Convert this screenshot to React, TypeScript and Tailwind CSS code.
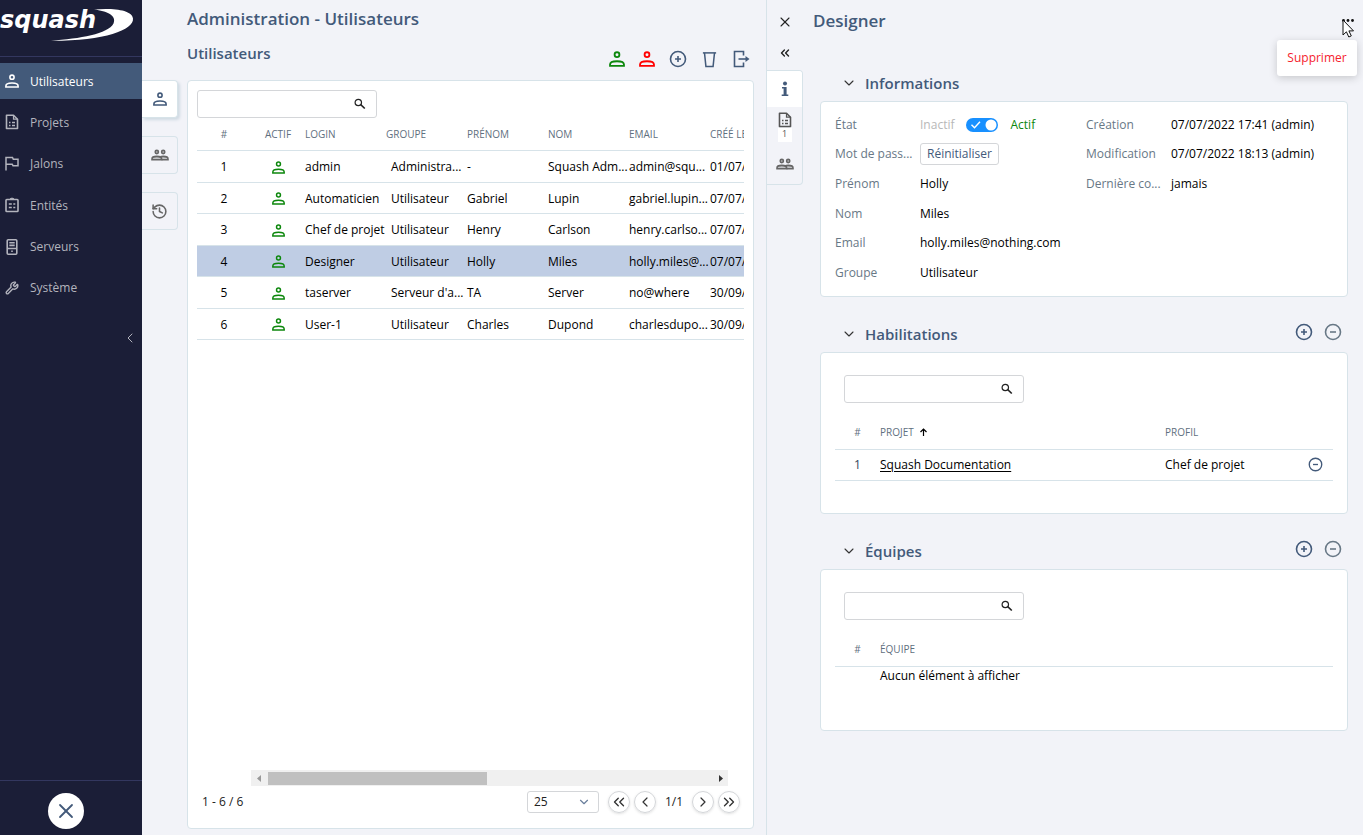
import React from "react";
import { Wrench, History, X, ChevronLeft, ChevronRight, ChevronDown, ChevronsLeft, ChevronsRight } from "lucide-react";

type IconProps = { className?: string };

const PersonIcon = ({ className = "" }: IconProps) => (
  <svg className={className} viewBox="0 0 14 14" fill="none" stroke="currentColor" strokeWidth="1.6" aria-hidden="true">
    <circle cx="7" cy="3.2" r="2.1" />
    <path d="M0.9 13v-1.1C0.9 10 4 9 7 9s6.1 1 6.1 2.900V13z" />
  </svg>
);

const GroupIcon = ({ className = "" }: IconProps) => (
  <svg className={className} viewBox="0 0 18 12" fill="none" stroke="currentColor" strokeWidth="1.6" aria-hidden="true">
    <circle cx="5.8" cy="3" r="1.600" fill="currentColor" fillOpacity="0.3" />
    <circle cx="12.2" cy="3" r="1.600" fill="currentColor" fillOpacity="0.3" />
    <path d="M1 10.700V9.900C1 8.300 3.400 7.400 5.800 7.400S10.600 8.300 10.600 9.900v0.800z" fill="currentColor" fillOpacity="0.350" />
    <path d="M8.500 7.900C9.500 7.600 10.900 7.400 12.200 7.400 14.600 7.400 17 8.300 17 9.900v0.800H10.600" fill="currentColor" fillOpacity="0.350" />
  </svg>
);

const DocIcon = ({ className = "" }: IconProps) => (
  <svg className={className} viewBox="0 0 14 16" fill="none" stroke="currentColor" strokeWidth="1.6" aria-hidden="true">
    <path d="M1.500 1.200h7l4 4v9.300h-11z" strokeLinejoin="round" />
    <path d="M8.500 1.200v4h4" strokeWidth="1.200" />
    <path d="M4 8.500h1.500M7 8.500h3M4 11.500h1.500M7 11.500h3" />
  </svg>
);

const FlagIcon = ({ className = "" }: IconProps) => (
  <svg className={className} viewBox="0 0 14 15" fill="none" stroke="currentColor" strokeWidth="1.500" aria-hidden="true">
    <path d="M1 14.500V1.500h6.500l0.800 1.700H13v6.500H8L7.200 8.200H1" />
  </svg>
);

const ClipboardIcon = ({ className = "" }: IconProps) => (
  <svg className={className} viewBox="0 0 14 16" fill="none" stroke="currentColor" strokeWidth="1.600" aria-hidden="true">
    <rect x="1" y="2.500" width="12" height="12" rx="0.800" />
    <path d="M4.600 2.500C5 0.700 9 0.700 9.400 2.500z" fill="currentColor" strokeWidth="1" />
    <path d="M3.800 7h3M8.300 7h2M3.800 10.500h3M8.300 10.500h2" />
  </svg>
);

const ServerIcon = ({ className = "" }: IconProps) => (
  <svg className={className} viewBox="0 0 14 16" fill="none" stroke="currentColor" strokeWidth="1.600" aria-hidden="true">
    <rect x="2.200" y="0.800" width="9.600" height="14.400" rx="1" />
    <path d="M4.300 3.800h5.400M4.300 6.400h5.400M2.200 9.500h9.600M6.200 12.300h1.600" />
  </svg>
);

const PlusCircle = ({ className = "" }: IconProps) => (
  <svg className={className} viewBox="0 0 18 18" fill="none" stroke="currentColor" strokeWidth="1.600" aria-hidden="true">
    <circle cx="9" cy="9" r="7.500" />
    <path d="M9 6v6M6 9h6" />
  </svg>
);

const MinusCircle = ({ className = "" }: IconProps) => (
  <svg className={className} viewBox="0 0 18 18" fill="none" stroke="currentColor" strokeWidth="1.600" aria-hidden="true">
    <circle cx="9" cy="9" r="7.500" />
    <path d="M6 9h6" />
  </svg>
);

const TrashIcon = ({ className = "" }: IconProps) => (
  <svg className={className} viewBox="0 0 18 18" fill="none" stroke="currentColor" strokeWidth="1.600" aria-hidden="true">
    <path d="M2 2h14" />
    <path d="M3.700 2l1.500 14.300h7.600L14.300 2" />
  </svg>
);

const ExportIcon = ({ className = "" }: IconProps) => (
  <svg className={className} viewBox="0 0 18 18" fill="none" stroke="currentColor" strokeWidth="1.600" aria-hidden="true">
    <path d="M11.500 5.500V1.500h-9v15h9v-4" />
    <path d="M6.500 9h9" />
    <path d="M13.500 6L17.500 9l-4 3z" fill="currentColor" stroke="none" />
  </svg>
);

const SearchIcon = ({ className = "" }: IconProps) => (
  <svg className={className} viewBox="0 0 12 12" fill="none" stroke="currentColor" aria-hidden="true">
    <circle cx="4.300" cy="4.500" r="3.200" strokeWidth="1.200" />
    <path d="M6.700 6.700L10.800 10.500" strokeWidth="1.600" />
  </svg>
);

const Logo = () => (
  <svg className="h-14 w-[142px]" viewBox="0 0 142 56" role="img" aria-label="squash">
    <text x="0" y="28" fill="#fff" fontFamily="DejaVu Sans" fontWeight="700" fontStyle="italic" fontSize="24">squash</text>
    <path fill="#fff" d="M94 9.500C112 8 132 9.500 133 18.500 134 30 104 41 51 40.800 80 38.500 108 34 113.500 23.500 117 15.500 107 11 94 9.500z" />
  </svg>
);

const menu = [
  { label: "Utilisateurs", icon: <PersonIcon className="size-[14px]" />, active: true },
  { label: "Projets", icon: <DocIcon className="h-4 w-[14px]" /> },
  { label: "Jalons", icon: <FlagIcon className="h-[15px] w-[14px]" /> },
  { label: "Entités", icon: <ClipboardIcon className="h-4 w-[14px]" /> },
  { label: "Serveurs", icon: <ServerIcon className="h-4 w-[14px]" /> },
  { label: "Système", icon: <Wrench className="size-[14px]" strokeWidth={2.4} /> },
];

const users = [
  ["admin", "Administra...", "-", "Squash Adm...", "admin@squ...", "01/07/2022"],
  ["Automaticien", "Utilisateur", "Gabriel", "Lupin", "gabriel.lupin...", "07/07/2022"],
  ["Chef de projet", "Utilisateur", "Henry", "Carlson", "henry.carlso...", "07/07/2022"],
  ["Designer", "Utilisateur", "Holly", "Miles", "holly.miles@...", "07/07/2022"],
  ["taserver", "Serveur d'a...", "TA", "Server", "no@where", "30/09/2021"],
  ["User-1", "Utilisateur", "Charles", "Dupond", "charlesdupo...", "30/09/2021"],
];

const card = "rounded border border-[#d7e3e9] bg-white";
const th = "p-0 text-left text-[10px] font-normal uppercase text-[#5f7080] whitespace-nowrap";

function SearchBox({ label }: { label: string }) {
  return (
    <label className="flex h-7 w-[180px] items-center rounded-[3px] border border-[#d4d6d9] bg-white pr-[10px]">
      <input type="text" aria-label={label} className="h-full min-w-0 flex-1 bg-transparent px-2 outline-none" />
      <SearchIcon className="size-3 text-[#222]" />
    </label>
  );
}

function Sidebar() {
  return (
    <nav className="flex w-[142px] shrink-0 flex-col bg-[#1b1e37] text-[#b3b4bd]">
      <div className="border-b border-[#33375f]"><Logo /></div>
      <ul className="mt-[6px] flex h-[243px] flex-col justify-between">
        {menu.map((m) => (
          <li key={m.label}>
            <a href="#" className={m.active ? "flex h-9 items-center gap-[11px] bg-[#435a7a] pl-[5px] text-white" : "flex h-9 items-center gap-[11px] pl-[5px]"}>
              {m.icon}
              <span className="pt-px">{m.label}</span>
            </a>
          </li>
        ))}
      </ul>
      <button type="button" aria-label="Réduire" className="mt-6 mr-1 self-end">
        <ChevronLeft className="size-4" strokeWidth={1.5} />
      </button>
      <div className="mt-auto flex h-[55px] justify-center border-t border-[#33375f] pt-3 pr-[10px]">
        <button type="button" aria-label="Fermer" className="flex size-9 items-center justify-center rounded-full bg-white text-[#435a7a]">
          <X className="size-6" strokeWidth={1.8} />
        </button>
      </div>
    </nav>
  );
}

const pageButton = "flex size-[22px] items-center justify-center rounded-full border border-[#d4d6d9] text-[#333] shadow-sm";

function UsersPanel() {
  return (
    <main className="flex min-w-0 pr-3 text-[#435a7a]">
      <div className="flex w-9 shrink-0 flex-col gap-[18px] pt-20">
        <button type="button" aria-label="Utilisateurs" className="flex h-[38px] items-center justify-center rounded-r border border-l-0 border-[#d7e3e9] bg-white shadow-[2px_2px_3px_#d0dae3]">
          <PersonIcon className="size-[14px]" />
        </button>
        <button type="button" aria-label="Équipes" className="flex h-[38px] items-center justify-center rounded-r border border-l-0 border-[#d7e3e9] text-[#666]">
          <GroupIcon className="h-3 w-[18px]" />
        </button>
        <button type="button" aria-label="Historique" className="flex h-[38px] items-center justify-center rounded-r border border-l-0 border-[#d7e3e9] text-[#666]">
          <History className="size-[17px]" strokeWidth={2.2} />
        </button>
      </div>
      <div className="flex min-w-0 flex-1 flex-col pb-[6px] pl-[9px]">
        <h1 className="flex h-[38px] items-center text-[17px] font-semibold">Administration - Utilisateurs</h1>
        <div className="flex h-[42px] justify-between">
          <h2 className="pt-[5px] text-[15px] leading-5 font-semibold">Utilisateurs</h2>
          <div className="flex items-center gap-[14px] pr-1">
            <button type="button" aria-label="Activer" className="text-[#0c870c]"><PersonIcon className="size-4" /></button>
            <button type="button" aria-label="Désactiver" className="text-[#f00]"><PersonIcon className="size-4" /></button>
            <button type="button" aria-label="Ajouter"><PlusCircle className="size-[18px]" /></button>
            <button type="button" aria-label="Supprimer les utilisateurs"><TrashIcon className="size-[17px]" /></button>
            <button type="button" aria-label="Exporter"><ExportIcon className="size-[18px]" /></button>
          </div>
        </div>
        <section className={`flex min-h-0 flex-1 flex-col px-[9px] pt-[9px] ${card}`}>
          <SearchBox label="Rechercher un utilisateur" />
          <div className="min-h-0 flex-1 overflow-hidden text-black">
            <table className="w-[594px] table-fixed border-collapse">
              <colgroup>
                <col className="w-[54px]" /><col className="w-[54px]" /><col className="w-[81px]" /><col className="w-[81px]" />
                <col className="w-[81px]" /><col className="w-[81px]" /><col className="w-[81px]" /><col className="w-[81px]" />
              </colgroup>
              <thead>
                <tr className="h-8 border-b border-[#d7e3e9]">
                  <th className="p-0 text-center text-[10px] font-normal text-[#5f7080]">#</th>
                  <th className="p-0 text-center text-[10px] font-normal text-[#5f7080]">ACTIF</th>
                  {["Login", "Groupe", "Prénom", "Nom", "Email", "Créé le"].map((h) => <th key={h} className={th}>{h}</th>)}
                </tr>
              </thead>
              <tbody>
                {users.map((u, i) => (
                  <tr key={u[0]} className={u[0] === "Designer" ? "h-[31px] border-b border-[#d7e3e9] bg-[#bfcde4]" : "border-b border-[#d7e3e9] odd:h-8 even:h-[31px]"}>
                    <td className="p-0 pt-[2px] text-center">{i + 1}</td>
                    <td className="p-0 pt-[2px]"><PersonIcon className="mx-auto size-[13px] text-[#0c870c]" /></td>
                    {u.map((c, j) => (
                      <td key={j} className={j === 1 ? "p-0 pt-[2px] pl-[5px] whitespace-nowrap" : "p-0 pt-[2px] whitespace-nowrap"}>{c}</td>
                    ))}
                  </tr>
                ))}
              </tbody>
            </table>
          </div>
          <div className="mr-4 ml-[54px] flex h-4 items-center bg-[#f0f0f0] pr-[5px] pl-[6px]">
            <svg className="mr-[7px] h-[7px] w-1" viewBox="0 0 4 7" aria-hidden="true"><path d="M4 0v7L0 3.500z" fill="#999" /></svg>
            <div className="h-[13px] w-[47%] bg-[#c0c0c0]" />
            <svg className="ml-auto h-[7px] w-1" viewBox="0 0 4 7" aria-hidden="true"><path d="M0 0v7l4-3.500z" fill="#333" /></svg>
          </div>
          <div className="flex h-[42px] items-center pb-[10px] pl-[5px] pr-1 text-[#222]">
            <span className="mr-auto">1 - 6 / 6</span>
            <span className="relative mr-[9px] flex items-center">
              <select aria-label="Lignes par page" defaultValue="25" className="h-[22px] w-[72px] appearance-none rounded-[3px] border border-[#d4d6d9] bg-white pl-[6px] leading-5">
                <option>25</option>
                <option>50</option>
              </select>
              <ChevronDown className="pointer-events-none absolute right-2 size-[14px] text-[#6a7f9c]" strokeWidth={2} />
            </span>
            <div className="flex items-center gap-1">
              <button type="button" aria-label="Première page" className={pageButton}><ChevronsLeft className="size-[18px]" strokeWidth={1.8} /></button>
              <button type="button" aria-label="Page précédente" className={pageButton}><ChevronLeft className="size-4" strokeWidth={1.8} /></button>
              <span className="w-7 text-center">1/1</span>
              <button type="button" aria-label="Page suivante" className={pageButton}><ChevronRight className="size-4" strokeWidth={1.8} /></button>
              <button type="button" aria-label="Dernière page" className={pageButton}><ChevronsRight className="size-[18px]" strokeWidth={1.8} /></button>
            </div>
          </div>
        </section>
      </div>
    </main>
  );
}

function SectionHeader({ title, actions }: { title: string; actions?: boolean }) {
  return (
    <div className="flex h-9 items-center pr-[6px] pl-[21px]">
      <ChevronDown className="size-4 text-[#333]" strokeWidth={1.6} />
      <h3 className="ml-2 text-[15px] font-semibold">{title}</h3>
      {actions && (
        <div className="ml-auto flex items-center gap-[11px] pb-1">
          <button type="button" aria-label={`Ajouter ${title}`}><PlusCircle className="size-[18px]" /></button>
          <button type="button" aria-label={`Retirer ${title}`} className="text-[#687886]"><MinusCircle className="size-[18px]" /></button>
        </div>
      )}
    </div>
  );
}

function Field({ label, children }: { label: string; children: React.ReactNode }) {
  return (
    <div className="flex items-center whitespace-nowrap">
      <dt className="w-[85px] shrink-0 text-[#687886]">{label}</dt>
      <dd className="flex items-center text-black">{children}</dd>
    </div>
  );
}

function DetailPanel() {
  return (
    <aside className="flex min-w-0 border-l border-[#d7e3e9] text-[#435a7a]">
      <div className="flex w-9 shrink-0 flex-col items-center">
        <button type="button" aria-label="Fermer le panneau" className="mt-[14px] text-[#222]"><X className="size-4" strokeWidth={1.6} /></button>
        <button type="button" aria-label="Agrandir" className="mt-4 mb-[10px] text-[#222]"><ChevronsLeft className="size-[14px]" strokeWidth={2.4} /></button>
        <div className="flex w-full flex-col overflow-hidden rounded-r border border-l-0 border-[#d7e3e9]">
          <button type="button" aria-label="Informations" className="flex h-9 items-center justify-center bg-white">
            <svg className="h-4 w-2" viewBox="0 0 8 16" fill="currentColor" aria-hidden="true">
              <circle cx="4" cy="2.500" r="2" />
              <path d="M1 6h4.600v7.500H7.300V15H0.700v-1.500H2.600V7.500H1z" />
            </svg>
          </button>
          <button type="button" aria-label="Habilitations" className="flex h-10 flex-col items-center pt-[5px] text-[#555]">
            <DocIcon className="h-4 w-[14px]" />
            <span className="h-[14px] w-[14px] bg-white text-center text-[9px] leading-3">1</span>
          </button>
          <button type="button" aria-label="Équipes" className="flex h-[37px] items-center justify-center pb-1 text-[#666]">
            <GroupIcon className="h-3 w-[18px]" />
          </button>
        </div>
      </div>
      <div className="flex min-w-0 flex-1 flex-col">
        <header className="flex h-[41px] items-center justify-between pr-[9px] pl-[10px]">
          <h2 className="text-[17px] font-semibold">Designer</h2>
          <div className="relative flex items-center">
            <button type="button" aria-label="Plus d'actions" className="text-[#111]">
              <svg className="h-1 w-3" viewBox="0 0 12 4" fill="currentColor" aria-hidden="true">
                <circle cx="1.500" cy="1.500" r="1.400" /><circle cx="6" cy="1.500" r="1.400" /><circle cx="10.500" cy="1.500" r="1.400" />
              </svg>
            </button>
            <svg className="absolute top-0 left-0 h-[19px] w-3" viewBox="0 0 12 19" aria-hidden="true">
              <path d="M1 1v15l3.400-3.200 2.400 5.200 2.500-1.100-2.400-5H11.500z" fill="#fff" stroke="#111" strokeWidth="1" />
            </svg>
            <div role="menu" className="absolute top-[21px] -right-[3px] rounded-[3px] bg-white shadow-[0_2px_8px_rgba(0,0,0,0.18)]">
              <button type="button" role="menuitem" className="flex h-9 w-20 items-center justify-center text-[#f5222d]">Supprimer</button>
            </div>
          </div>
        </header>
        <div className="flex flex-col pt-6 pr-[15px] pl-[17px]">
          <section>
            <SectionHeader title="Informations" />
            <div className={`grid grid-cols-[251fr_247fr] px-[14px] py-2 ${card}`}>
              <dl className="grid h-[178px] grid-rows-6">
                <Field label="État">
                  <span className="text-[#b8b8b8]">Inactif</span>
                  <label className="relative mx-3 flex items-center text-white">
                    <input type="checkbox" role="switch" defaultChecked aria-label="Actif" className="h-[14px] w-8 appearance-none rounded-full bg-[#1890ff]" />
                    <svg className="pointer-events-none absolute inset-0 h-[14px] w-8" viewBox="0 0 32 14" aria-hidden="true">
                      <path d="M5.500 6.800l3 3 5.500-6" fill="none" stroke="#fff" strokeWidth="1.4" />
                      <circle cx="25" cy="7" r="5.500" fill="#fff" />
                    </svg>
                  </label>
                  <span className="text-[#0c870c]">Actif</span>
                </Field>
                <Field label="Mot de pass...">
                  <button type="button" className="h-[22px] rounded-[3px] border border-[#d4d6d9] px-[6px] text-[#435a7a]">Réinitialiser</button>
                </Field>
                <Field label="Prénom">Holly</Field>
                <Field label="Nom">Miles</Field>
                <Field label="Email">holly.miles@nothing.com</Field>
                <Field label="Groupe">Utilisateur</Field>
              </dl>
              <dl className="grid h-[178px] grid-rows-6">
                <Field label="Création">07/07/2022 17:41 (admin)</Field>
                <Field label="Modification">07/07/2022 18:13 (admin)</Field>
                <Field label="Dernière co...">jamais</Field>
              </dl>
            </div>
          </section>
          <section className="mt-[19px]">
            <SectionHeader title="Habilitations" actions />
            <div className={`h-[162px] px-[14px] pt-[22px] ${card}`}>
              <div className="pl-[9px]"><SearchBox label="Rechercher une habilitation" /></div>
              <table className="mt-3 w-full table-fixed border-collapse">
                <colgroup><col className="w-[45px]" /><col className="w-[285px]" /><col /><col className="w-9" /></colgroup>
                <thead>
                  <tr className="h-[34px] border-b border-[#d7e3e9]">
                    <th className="p-0 text-center text-[10px] font-normal text-[#5f7080]">#</th>
                    <th className={th}>
                      <span className="flex items-center gap-[6px]">
                        Projet
                        <svg className="h-2 w-[7px] text-black" viewBox="0 0 7 8" fill="none" stroke="currentColor" strokeWidth="1.2" aria-hidden="true"><path d="M3.500 8V1M0.500 4l3-3 3 3" /></svg>
                      </span>
                    </th>
                    <th className={th}>Profil</th>
                    <th className="p-0"><span className="sr-only">Actions</span></th>
                  </tr>
                </thead>
                <tbody>
                  <tr className="h-[31px] border-b border-[#d7e3e9] text-black">
                    <td className="p-0 text-center text-[#33465c]">1</td>
                    <td className="p-0"><a href="#" className="underline underline-offset-2">Squash Documentation</a></td>
                    <td className="p-0">Chef de projet</td>
                    <td className="p-0"><button type="button" aria-label="Retirer" className="mx-auto block text-[#435a7a]"><MinusCircle className="size-[15px]" /></button></td>
                  </tr>
                </tbody>
              </table>
            </div>
          </section>
          <section className="mt-[19px]">
            <SectionHeader title="Équipes" actions />
            <div className={`h-[162px] px-[14px] pt-[22px] ${card}`}>
              <div className="pl-[9px]"><SearchBox label="Rechercher une équipe" /></div>
              <table className="mt-3 w-full table-fixed border-collapse">
                <colgroup><col className="w-[45px]" /><col /></colgroup>
                <thead>
                  <tr className="h-[34px] border-b border-[#d7e3e9]">
                    <th className="p-0 text-center text-[10px] font-normal text-[#5f7080]">#</th>
                    <th className={th}>Équipe</th>
                  </tr>
                </thead>
                <tbody>
                  <tr className="h-5 text-black">
                    <td className="p-0" />
                    <td className="p-0">Aucun élément à afficher</td>
                  </tr>
                </tbody>
              </table>
            </div>
          </section>
        </div>
      </div>
    </aside>
  );
}

export default function App() {
  return (
    <div className="flex h-screen min-h-[640px] overflow-hidden bg-[#f2f3f8] font-['Open_Sans',sans-serif] text-[12px] leading-[18px]">
      <Sidebar />
      <div className="grid min-w-0 flex-1 grid-cols-[624fr_597fr]">
        <UsersPanel />
        <DetailPanel />
      </div>
    </div>
  );
}
